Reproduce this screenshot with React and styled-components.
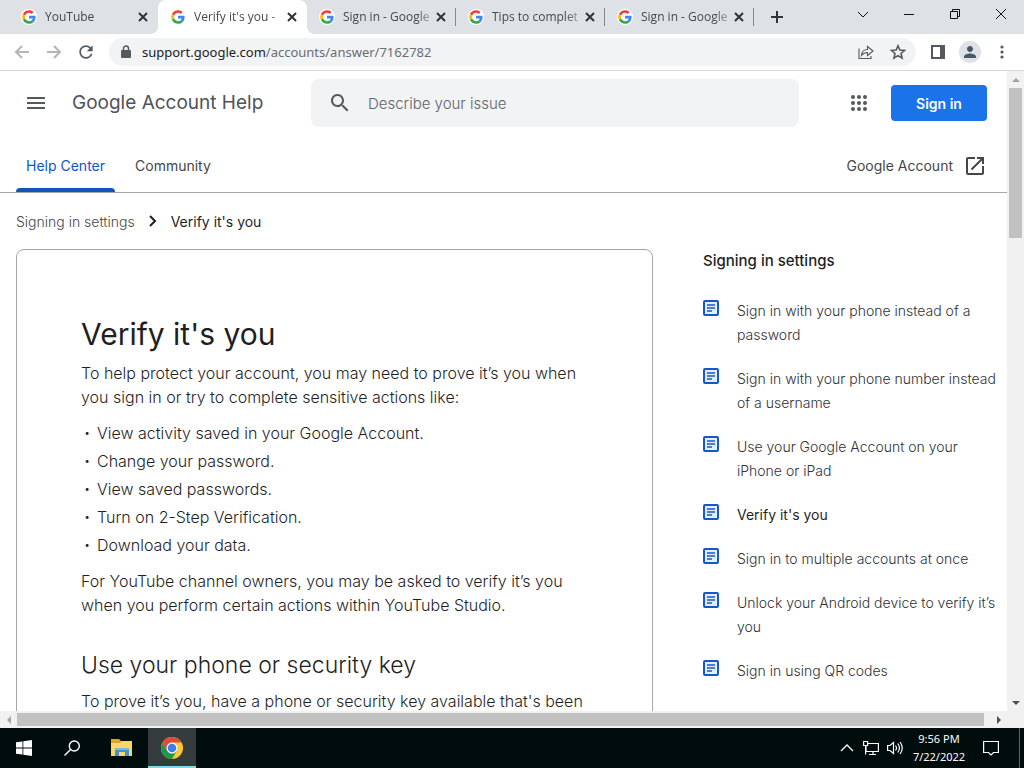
import React from "react";
import styled, { createGlobalStyle, css } from "styled-components";

const ui = '"Noto Sans", "Open Sans", sans-serif';
const body = 'Inter, Roboto, sans-serif';

const GlobalStyle = createGlobalStyle`
  *, *::before, *::after { box-sizing: border-box; }
  body { margin: 0; font-family: ${body}; color: #1f1f1f; background: #fff; }
  button, input { font: inherit; color: inherit; border: 0; padding: 0; background: none; }
  a { color: inherit; text-decoration: none; }
  h1, h2, h3, p, ul, ol { margin: 0; padding: 0; font-weight: inherit; }
  svg { display: block; flex: none; }
`;

const Desktop = styled.div`
  display: flex;
  flex-direction: column;
  height: 100vh;
  overflow: hidden;
`;

/* Browser tab strip */
const TabStrip = styled.div`
  display: flex;
  flex: none;
  height: 34px;
  padding-left: 9px;
  background: #dee1e6;
  font-family: "Open Sans", sans-serif;
`;

const Tab = styled.div`
  position: relative;
  display: flex;
  align-items: center;
  flex: 0 1 149px;
  min-width: 0;
  padding: 0 8px 0 12px;
  color: #45494d;
  border-right: 1px solid ${(p) => (p.$divider ? "#85888c" : "transparent")};
  border-image: ${(p) => (p.$divider ? "linear-gradient(transparent 24%, #85888c 24%, #85888c 76%, transparent 76%) 1" : "none")};
  ${(p) =>
    p.$active &&
    css`
      background: #fff;
      border-radius: 8px 8px 0 0;
      &::before, &::after {
        content: "";
        position: absolute;
        bottom: 0;
        width: 8px;
        height: 8px;
      }
      &::before { left: -8px; background: radial-gradient(circle at 0 0, transparent 8px, #fff 8px); }
      &::after { right: -9px; background: radial-gradient(circle at 100% 0, transparent 8px, #fff 8px); }
    `}
`;

const TabTitle = styled.span`
  flex: 1;
  min-width: 0;
  margin-left: 8px;
  overflow: hidden;
  white-space: nowrap;
  font-size: 12px;
  line-height: 18px;
  mask-image: linear-gradient(to right, #000 80%, rgba(0, 0, 0, 0.15));
`;

const IconButton = styled.button`
  display: grid;
  place-items: center;
  flex: none;
  width: ${(p) => p.$w || 32}px;
  height: ${(p) => p.$h || 28}px;
  color: ${(p) => p.$color || "#55585c"};
`;

const WindowControls = styled.div`
  display: flex;
  margin-left: auto;
`;

/* Address bar */
const Toolbar = styled.div`
  display: flex;
  flex: none;
  align-items: center;
  height: 37px;
  padding: 0 6px;
  border-bottom: 1px solid #d5d7d9;
  background: #fff;
`;

const Omnibox = styled.form`
  display: flex;
  flex: 1;
  align-items: center;
  height: 28px;
  margin: 0 6px 0 7px;
  padding: 0 2px 0 12px;
  border-radius: 14px;
  background: #f1f3f4;
`;

const Address = styled.a`
  flex: 1;
  margin-left: 11px;
  color: #6a6d71;
  font-family: ${ui};
  font-size: 13px;
  line-height: 20px;
  b { color: #202124; font-weight: 400; }
`;

const Avatar = styled.span`
  display: grid;
  place-items: center;
  width: 22px;
  height: 22px;
  border-radius: 50%;
  background: #dee1e6;
`;

/* Page viewport with its scroll bars */
const Viewport = styled.div`
  display: grid;
  grid-template-columns: minmax(0, 1fr) 17px;
  grid-template-rows: minmax(0, 1fr) 17px;
  flex: 1;
  min-height: 0;
`;

const Page = styled.div`
  overflow: hidden;
`;

const ScrollBar = styled.div`
  display: flex;
  flex-direction: ${(p) => (p.$vertical ? "column" : "row")};
  align-items: center;
  background: #f1f1f1;
`;

const ScrollArrow = styled.span`
  display: grid;
  place-items: center;
  width: 17px;
  height: 17px;
  color: ${(p) => (p.$dim ? "#a3a3a3" : "#505050")};
`;

const Thumb = styled.span`
  background: #c1c1c1;
  ${(p) =>
    p.$vertical
      ? css`width: 13px; height: 150px; margin-bottom: auto;`
      : css`height: 13px; flex: 1; margin-right: 6px;`}
`;

const Header = styled.header`
  display: flex;
  align-items: center;
  height: 64px;
  padding: 0 20px;
`;

const Brand = styled.a`
  flex: 0 0 223px;
  margin-left: 20px;
  color: #505357;
  font-size: 19px;
  line-height: 28px;
  white-space: nowrap;
`;

const SearchForm = styled.form`
  display: flex;
  flex: 0 1 488px;
  align-items: center;
  height: 48px;
  margin: 0 auto 0 16px;
  padding-left: 13px;
  border-radius: 8px;
  background: #f1f3f4;
`;

const SearchInput = styled.input`
  flex: 1;
  min-width: 0;
  height: 48px;
  margin-left: 12px;
  outline: 0;
  font-family: ${body};
  font-size: 15px;
  font-weight: 300;
  &::placeholder { color: #5f6368; opacity: 1; }
`;

const SignIn = styled.button`
  width: 96px;
  height: 36px;
  margin-left: 16px;
  border-radius: 4px;
  background: #1a73e8;
  color: #fff;
  font-size: 14px;
  font-weight: 600;
`;

const NavBar = styled.nav`
  display: flex;
  align-items: stretch;
  height: 58px;
  padding: 0 20px 0 16px;
  border-bottom: 1px solid #a4a6a8;
  color: #444746;
  font-size: 14px;
  line-height: 20px;
`;

const NavLink = styled.a`
  position: relative;
  display: flex;
  align-items: center;
  height: 100%;
  padding: 5px 10px 0;
  margin-right: 10px;
  color: ${(p) => (p.$active ? "#0b57d0" : "inherit")};
  &::after {
    content: "";
    display: ${(p) => (p.$active ? "block" : "none")};
    position: absolute;
    right: 0;
    bottom: 0;
    left: 0;
    height: 4px;
    border-radius: 4px 4px 0 0;
    background: #1155b9;
  }
`;

const AccountLink = styled.a`
  display: flex;
  align-items: center;
  gap: 10px;
  margin-left: auto;
  padding-top: 4px;
`;

const Breadcrumb = styled.nav`
  display: flex;
  align-items: center;
  gap: 10px;
  height: 56px;
  padding: 0 16px;
  color: #1f1f1f;
  font-size: 14px;
  a { color: #44474b; font-weight: 300; }
`;

const Columns = styled.div`
  display: flex;
  align-items: flex-start;
  gap: 50px;
  padding: 0 8px 0 16px;
`;

const Article = styled.article`
  flex: 1;
  padding: 64px;
  border: 1px solid #a4a6a8;
  border-radius: 8px;
  color: #1f1f1f;
  font-size: 16px;
  font-weight: 300;
  line-height: 24px;
  h1 { margin-bottom: 7px; font-size: 30px; line-height: 40px; font-weight: 400; }
  h2 { margin: 32px 0 8px; font-size: 23px; line-height: 32px; }
`;

const Bullets = styled.ul`
  margin: 12px 0;
  list-style: none;
  li { display: flex; }
  li + li { margin-top: 4px; }
  li::before { content: "•"; flex: 0 0 16px; padding-left: 3px; font-size: 11px; }
`;

const Aside = styled.aside`
  flex: 0 0 296px;
  h3 { font-size: 15px; line-height: 24px; font-weight: 500; }
  ul { margin-top: 26px; list-style: none; }
`;

const AsideItem = styled.li`
  margin-bottom: 20px;
  color: ${(p) => (p.$current ? "#1f1f1f" : "#2f3236")};
  font-size: 14px;
  font-weight: ${(p) => (p.$current ? 400 : 300)};
  line-height: 24px;
  a { display: flex; gap: 18px; }
`;

/* Taskbar */
const Taskbar = styled.footer`
  display: flex;
  flex: none;
  align-items: stretch;
  height: 40px;
  background: #010c0d;
  color: #fff;
  font-family: ${ui};
`;

const TaskButton = styled.button`
  display: grid;
  place-items: center;
  width: ${(p) => p.$w || 48}px;
  color: #fff;
  ${(p) =>
    p.$running &&
    css`
      background: #343c3d;
      box-shadow: inset 0 -2px #80d8e4;
    `}
`;

const Clock = styled.time`
  width: 64px;
  padding-top: 2px;
  font-size: 11px;
  line-height: 18px;
  text-align: center;
  span { display: block; }
`;

const Tray = styled.div`
  display: flex;
  margin-left: auto;
`;

const ShowDesktop = styled.button`
  width: 5px;
  margin-left: 8px;
  border-left: 1px solid #5c6566;
`;

const GoogleG = () => (
  <svg width="16" height="16" viewBox="-4 -4 56 56" aria-hidden="true">
    <circle cx="24" cy="24" r="28" fill="#fff" />
    <path fill="#EA4335" d="M24 9.5c3.54 0 6.71 1.22 9.21 3.6l6.85-6.85C35.9 2.38 30.47 0 24 0 14.62 0 6.51 5.38 2.56 13.22l7.98 6.19C12.43 13.72 17.74 9.5 24 9.5z" />
    <path fill="#4285F4" d="M46.98 24.55c0-1.57-.15-3.09-.38-4.55H24v9.02h12.94c-.58 2.96-2.26 5.48-4.78 7.18l7.73 6c4.51-4.18 7.09-10.36 7.09-17.65z" />
    <path fill="#FBBC05" d="M10.53 28.59c-.48-1.45-.76-2.99-.76-4.59s.27-3.14.76-4.59l-7.98-6.19C.92 16.46 0 20.12 0 24c0 3.88.92 7.54 2.56 10.78l7.97-6.19z" />
    <path fill="#34A853" d="M24 48c6.48 0 11.93-2.13 15.89-5.81l-7.73-6c-2.15 1.45-4.92 2.3-8.16 2.3-6.26 0-11.57-4.22-13.47-9.91l-7.98 6.19C6.51 42.62 14.62 48 24 48z" />
  </svg>
);

const Line = ({ size = 16, box = 16, w = 2, d, h }) => (
  <svg width={size} height={h || size} viewBox={`0 0 ${box} ${box}`} fill="none" stroke="currentColor" strokeWidth={w} aria-hidden="true">
    <path d={d} />
  </svg>
);

const Solid = ({ size = 24, box = 24, d, fill = "currentColor" }) => (
  <svg width={size} height={size} viewBox={`0 0 ${box} ${box}`} fill={fill} aria-hidden="true">
    <path d={d} />
  </svg>
);

const ArticleIcon = () => (
  <svg width="16" height="18" viewBox="0 0 16 18" fill="none" stroke="#1558c8" aria-hidden="true">
    <rect x="1" y="2" width="14" height="14" rx="1" strokeWidth="2" fill="#e3edfb" />
    <path d="M4 6h8M4 9h8M4 12h5" strokeWidth="1.5" />
  </svg>
);

const Arrow = ({ d }) => <Solid size={8} box={8} d={d} />;

const ChromeLogo = () => (
  <svg width="24" height="24" viewBox="0 0 24 24" aria-hidden="true">
    <circle cx="12" cy="12" r="11" fill="#fbc934" />
    <path fill="#df4a3d" d="M2.47 6.5A11 11 0 0 1 21.53 6.5H12L7.24 14.75z" />
    <path fill="#23964c" d="M2.47 6.5A11 11 0 0 0 12 23l4.76-8.25H12L7.24 14.75z" />
    <circle cx="12" cy="12" r="5.5" fill="#fff" />
    <circle cx="12" cy="12" r="4.3" fill="#3b7ded" />
  </svg>
);

const FolderIcon = () => (
  <svg width="22" height="20" viewBox="0 0 22 20" aria-hidden="true">
    <path fill="#e5a22f" d="M0 1h8l2 2h11v4H0z" />
    <path fill="#fad568" d="M0 5h9l2-2h10v15H0z" />
    <path fill="#3f94c9" d="M4 10h14v8h-4v-4H8v4H4z" />
    <path fill="#73bde4" d="M4 10h14v2H4z" />
  </svg>
);

const tabs = ["YouTube", "Verify it's you -", "Sign in - Google", "Tips to complet", "Sign in - Google"];

const bullets = [
  "View activity saved in your Google Account.",
  "Change your password.",
  "View saved passwords.",
  "Turn on 2-Step Verification.",
  "Download your data.",
];

const related = [
  "Sign in with your phone instead of a password",
  "Sign in with your phone number instead of a username",
  "Use your Google Account on your iPhone or iPad",
  "Verify it's you",
  "Sign in to multiple accounts at once",
  "Unlock your Android device to verify it’s you",
  "Sign in using QR codes",
];

export default function App() {
  return (
    <Desktop>
      <GlobalStyle />
      <TabStrip>
        {tabs.map((title, i) => (
          <Tab key={i} $active={i === 1} $divider={i > 1}>
            <GoogleG />
            <TabTitle>{title}</TabTitle>
            <IconButton $w={12} $h={16} $color="#303337" aria-label="Close tab">
              <Line size={12} box={12} d="M2 2l8 8M10 2l-8 8" />
            </IconButton>
          </Tab>
        ))}
        <IconButton $w={46} $h={34} $color="#303337" aria-label="New tab">
          <Line size={12} box={12} d="M6 0v12M0 6h12" />
        </IconButton>
        <WindowControls>
          <IconButton $w={46} $color="#111" aria-label="Search tabs">
            <Line size={12} box={12} w={1} d="M1 4l5 5 5-5" />
          </IconButton>
          <IconButton $w={46} $color="#111" aria-label="Minimize">
            <Line size={10} box={10} w={1} d="M0 5.5h10" />
          </IconButton>
          <IconButton $w={46} $color="#111" aria-label="Restore">
            <Line size={10} box={10} w={1} d="M.5 2.5h7v7h-7zM2.5 2.500V.5h7v7h-2" />
          </IconButton>
          <IconButton $w={46} $color="#111" aria-label="Close window">
            <Line size={12} box={12} w={1} d="M1 1l10 10M11 1L1 11" />
          </IconButton>
        </WindowControls>
      </TabStrip>

      <Toolbar>
        <IconButton $color="#b4b6b9" aria-label="Back">
          <Line d="M15 8H2M8 2L2 8l6 6" />
        </IconButton>
        <IconButton $color="#b4b6b9" aria-label="Forward">
          <Line d="M1 8h13M8 2l6 6-6 6" />
        </IconButton>
        <IconButton aria-label="Reload">
          <Solid size={20} d="M17.650 6.350C16.200 4.900 14.210 4 12 4c-4.420 0-7.990 3.580-7.990 8s3.570 8 7.990 8c3.730 0 6.840-2.550 7.730-6h-2.080c-.82 2.330-3.040 4-5.650 4-3.310 0-6-2.690-6-6s2.690-6 6-6c1.660 0 3.140.69 4.220 1.780L13 11h7V4l-2.350 2.350z" />
        </IconButton>
        <Omnibox onSubmit={(e) => e.preventDefault()}>
          <svg width="10" height="14" viewBox="0 0 10 14" aria-hidden="true">
            <rect y="5" width="10" height="8" rx="1" fill="#55585c" />
            <path d="M2.500 5V3.500a2.500 2.500 0 0 1 5 0V5" fill="none" stroke="#55585c" strokeWidth="1.5" />
          </svg>
          <Address href="#address"><b>support.google.com</b>/accounts/answer/7162782</Address>
          <IconButton type="button" aria-label="Share">
            <Line w={1.1} d="M1 4.500V14.500h12V12M3.500 11.500c.3-4 2.500-6 6-6V2.500L15 7l-5.500 4.500V8.500C7 8.500 5 9.500 3.500 11.500z" />
          </IconButton>
          <IconButton type="button" aria-label="Bookmark">
            <Line w={1.6} d="M8 1.800l1.800 4.300 4.700.4-3.500 3 1.100 4.600L8 11.600l-4.100 2.500L5 9.500l-3.500-3 4.700-.4z" />
          </IconButton>
        </Omnibox>
        <IconButton aria-label="Side panel">
          <svg width="14" height="14" viewBox="0 0 14 14" aria-hidden="true">
            <path d="M1 1h12v12H1z" fill="none" stroke="#55585c" strokeWidth="2" />
            <path d="M9 1h4v12H9z" fill="#55585c" />
          </svg>
        </IconButton>
        <IconButton $color="#4b5568" aria-label="Profile">
          <Avatar><Solid size={18} d="M12 12c2.210 0 4-1.790 4-4s-1.790-4-4-4-4 1.790-4 4 1.790 4 4 4zm0 2c-2.670 0-8 1.340-8 4v2h16v-2c0-2.660-5.330-4-8-4z" /></Avatar>
        </IconButton>
        <IconButton aria-label="Menu">
          <svg width="4" height="14" viewBox="0 0 4 14" fill="currentColor" aria-hidden="true">
            {[2, 7, 12].map((y) => <circle key={y} cx="2" cy={y} r="1.6" />)}
          </svg>
        </IconButton>
      </Toolbar>

      <Viewport>
        <Page>
          <Header>
            <IconButton aria-label="Main menu">
              <Line size={18} box={18} d="M0 4h18M0 9h18M0 14h18" />
            </IconButton>
            <Brand href="#home">Google Account Help</Brand>
            <SearchForm role="search" onSubmit={(e) => e.preventDefault()}>
              <IconButton aria-label="Search">
                <Solid size={24} d="M15.500 14h-.79l-.28-.27C15.410 12.590 16 11.110 16 9.500 16 5.910 13.090 3 9.500 3S3 5.910 3 9.500 5.910 16 9.500 16c1.610 0 3.090-.59 4.230-1.570l.27.28v.79l5 4.990L20.490 19l-4.990-5zm-6 0C7.010 14 5 11.990 5 9.500S7.010 5 9.500 5 14 7.010 14 9.500 11.990 14 9.500 14z" />
              </IconButton>
              <SearchInput aria-label="Describe your issue" placeholder="Describe your issue" />
            </SearchForm>
            <IconButton aria-label="Google apps">
              <svg width="16" height="16" viewBox="0 0 16 16" fill="currentColor" aria-hidden="true">
                {[2, 8, 14].flatMap((y) => [2, 8, 14].map((x) => <circle key={`${x}-${y}`} cx={x} cy={y} r="2" />))}
              </svg>
            </IconButton>
            <SignIn>Sign in</SignIn>
          </Header>
          <NavBar>
            <NavLink href="#help" $active>Help Center</NavLink>
            <NavLink href="#community">Community</NavLink>
            <AccountLink href="#account">
              Google Account
              <Solid size={24} d="M19 19H5V5h7V3H5a2 2 0 0 0-2 2v14a2 2 0 0 0 2 2h14c1.100 0 2-.9 2-2v-7h-2v7zM14 3v2h3.590l-9.830 9.830 1.410 1.410L19 6.410V10h2V3h-7z" />
            </AccountLink>
          </NavBar>
          <Breadcrumb aria-label="Breadcrumb">
            <a href="#settings">Signing in settings</a>
            <Line d="M5 3l5 5-5 5" />
            <span>Verify it's you</span>
          </Breadcrumb>
          <Columns>
            <Article>
              <h1>Verify it's you</h1>
              <p>To help protect your account, you may need to prove it’s you when you sign in or try to complete sensitive actions like:</p>
              <Bullets>{bullets.map((text) => <li key={text}>{text}</li>)}</Bullets>
              <p>For YouTube channel owners, you may be asked to verify it’s you when you perform certain actions within YouTube Studio.</p>
              <h2>Use your phone or security key</h2>
              <p>To prove it’s you, have a phone or security key available that's been</p>
            </Article>
            <Aside>
              <h3>Signing in settings</h3>
              <ul>
                {related.map((text) => (
                  <AsideItem key={text} $current={text === "Verify it's you"}>
                    <a href="#article"><ArticleIcon />{text}</a>
                  </AsideItem>
                ))}
              </ul>
            </Aside>
          </Columns>
        </Page>
        <ScrollBar $vertical>
          <ScrollArrow $dim><Arrow d="M0 6l4-4 4 4z" /></ScrollArrow>
          <Thumb $vertical />
          <ScrollArrow><Arrow d="M0 2l4 4 4-4z" /></ScrollArrow>
        </ScrollBar>
        <ScrollBar>
          <ScrollArrow $dim><Arrow d="M6 0L2 4l4 4z" /></ScrollArrow>
          <Thumb />
          <ScrollArrow><Arrow d="M2 0l4 4-4 4z" /></ScrollArrow>
        </ScrollBar>
        <ScrollBar />
      </Viewport>

      <Taskbar>
        <TaskButton aria-label="Start">
          <Solid size={16} box={16} d="M0 2.300L6.500 1.400V7.600H0zM7.300 1.300L16 0v7.600H7.300zM0 8.400h6.500v6.200L0 13.700zM7.300 8.400H16V16l-8.700-1.300z" />
        </TaskButton>
        <TaskButton aria-label="Search">
          <Line w={1.4} d="M6.300 9.700L.5 15.500M15.300 6a5 5 0 1 1-10 0 5 5 0 0 1 10 0z" />
        </TaskButton>
        <TaskButton $w={52} aria-label="File Explorer"><FolderIcon /></TaskButton>
        <TaskButton $running aria-label="Google Chrome"><ChromeLogo /></TaskButton>
        <Tray>
          <TaskButton $w={24} aria-label="Show hidden icons">
            <Line size={14} box={14} w={1.3} d="M1 10l6-6 6 6" />
          </TaskButton>
          <TaskButton $w={24} aria-label="Network">
            <Line w={1.2} d="M5 3.500h10.400v8H3V6M10 11.500v3M6 14.500h7M.600 1.500h4v4h-4zM2.600 5.500v9" />
          </TaskButton>
          <TaskButton $w={24} aria-label="Volume">
            <Line w={1.2} d="M.600 5.500h2.400l3.500-3v11L3 10.500H.600zM8.500 5.500q2 2.500 0 5M10.700 3.500q3.500 4.500 0 9M13 2q4.500 6 0 12" />
          </TaskButton>
          <Clock><span>9:56 PM</span><span>7/22/2022</span></Clock>
          <TaskButton $w={40} aria-label="Notifications">
            <Line w={1.2} d="M.600 1.500h14.800v11H10.500L8 15l-2.500-2.500H.600z" />
          </TaskButton>
          <ShowDesktop aria-label="Show desktop" />
        </Tray>
      </Taskbar>
    </Desktop>
  );
}
